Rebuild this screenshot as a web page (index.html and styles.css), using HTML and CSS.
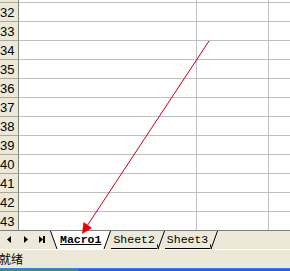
FILE: index.html
```html
<!DOCTYPE html>
<html>
<head>
<meta charset="utf-8">
<link rel="stylesheet" href="styles.css">
</head>
<body>
<div class="screen">
  <div class="sheet">
    <div class="row partial"><div class="hdr"></div><div class="cell a"></div><div class="cell b"></div><div class="cell c"></div></div>
    <div class="row"><div class="hdr">32</div><div class="cell a"></div><div class="cell b"></div><div class="cell c"></div></div>
    <div class="row"><div class="hdr">33</div><div class="cell a"></div><div class="cell b"></div><div class="cell c"></div></div>
    <div class="row"><div class="hdr">34</div><div class="cell a"></div><div class="cell b"></div><div class="cell c"></div></div>
    <div class="row"><div class="hdr">35</div><div class="cell a"></div><div class="cell b"></div><div class="cell c"></div></div>
    <div class="row"><div class="hdr">36</div><div class="cell a"></div><div class="cell b"></div><div class="cell c"></div></div>
    <div class="row"><div class="hdr">37</div><div class="cell a"></div><div class="cell b"></div><div class="cell c"></div></div>
    <div class="row"><div class="hdr">38</div><div class="cell a"></div><div class="cell b"></div><div class="cell c"></div></div>
    <div class="row"><div class="hdr">39</div><div class="cell a"></div><div class="cell b"></div><div class="cell c"></div></div>
    <div class="row"><div class="hdr">40</div><div class="cell a"></div><div class="cell b"></div><div class="cell c"></div></div>
    <div class="row"><div class="hdr">41</div><div class="cell a"></div><div class="cell b"></div><div class="cell c"></div></div>
    <div class="row"><div class="hdr">42</div><div class="cell a"></div><div class="cell b"></div><div class="cell c"></div></div>
    <div class="row"><div class="hdr">43</div><div class="cell a"></div><div class="cell b"></div><div class="cell c"></div></div>
  </div>
  <div class="tabbar">
    <div class="nav">
      <svg width="50" height="17" viewBox="0 0 50 17">
        <polygon points="11,5 7,8.5 11,12" fill="#000"/>
        <polygon points="24,5 28,8.5 24,12" fill="#000"/>
        <polygon points="39,5 43,8.5 39,12" fill="#000"/>
        <rect x="43" y="5" width="2" height="7" fill="#000"/>
      </svg>
    </div>
    <div class="tabs">
      <div class="tab active">
        <svg class="edge" width="8" height="18" viewBox="0 0 8 18"><polygon points="0,0 8,0 8,18 7,18" fill="#fff"/><line x1="0.5" y1="0" x2="7" y2="18" stroke="#000"/></svg>
        <span class="label">Macro1</span>
        <svg class="edge" width="8" height="18" viewBox="0 0 8 18"><polygon points="0,0 8,0 1,18 0,18" fill="#fff"/><line x1="1" y1="18" x2="7.5" y2="0" stroke="#000"/></svg>
      </div>
      <div class="tab">
        <span class="label">Sheet2</span>
        <svg class="edge" width="8" height="18" viewBox="0 0 8 18"><line x1="1" y1="18" x2="7.5" y2="0" stroke="#000"/><line x1="0" y1="13" x2="1.5" y2="18" stroke="#000"/></svg>
      </div>
      <div class="tab">
        <span class="label">Sheet3</span>
        <svg class="edge" width="8" height="18" viewBox="0 0 8 18"><line x1="1" y1="18" x2="7.5" y2="0" stroke="#000"/><line x1="0" y1="13" x2="1.5" y2="18" stroke="#000"/></svg>
      </div>
    </div>
  </div>
  <div class="status"><span class="ready">就绪</span></div>
  <div class="taskbar"><div class="start"></div></div>
  <svg class="arrow" width="290" height="271" viewBox="0 0 290 271">
    <line x1="209" y1="41" x2="87" y2="226" stroke="#c4001e" stroke-width="1"/>
    <polygon points="82,234 83.5,222 92,228" fill="#ee0000"/>
  </svg>
</div>
</body>
</html>
```
FILE: styles.css
```css
html, body {
  margin: 0;
  padding: 0;
  background: #fff;
}
.screen {
  position: relative;
  width: 290px;
  height: 271px;
  overflow: hidden;
  display: flex;
  flex-direction: column;
}
.sheet {
  display: flex;
  flex-direction: column;
  height: 230px;
  overflow: hidden;
}
.row {
  display: grid;
  grid-template-columns: 19px 178px 72px 1fr;
  height: 19px;
  flex: none;
}
.row.partial {
  height: 3px;
}
.hdr {
  box-sizing: border-box;
  background: #ece9d8;
  border-right: 1px solid #808080;
  border-bottom: 1px solid #aca899;
  font-family: "Liberation Sans", Arial, sans-serif;
  font-size: 13px;
  line-height: 19px;
  color: #000;
  text-align: right;
  padding-right: 6px;
  overflow: hidden;
  white-space: nowrap;
}
.cell {
  box-sizing: border-box;
  border-right: 1px solid #c0c0c0;
  border-bottom: 1px solid #c0c0c0;
}
.cell.c {
  border-right: none;
}
.tabbar {
  height: 18px;
  background: #ece9d8;
  border-top: 1px solid #808080;
  display: flex;
  flex: none;
}
.nav {
  width: 50px;
  flex: none;
}
.nav svg {
  display: block;
}
.tabs {
  display: flex;
  align-items: stretch;
}
.tab {
  display: flex;
  align-items: stretch;
  height: 18px;
}
.tab.active .label {
  background: #fff;
  font-weight: bold;
  text-decoration: underline;
}
.edge {
  display: block;
  flex: none;
}
.label {
  font-family: "Liberation Mono", "Courier New", monospace;
  font-size: 11.5px;
  line-height: 18px;
  color: #000;
  padding: 0 2px;
  border-bottom: 1px solid #000;
  box-sizing: border-box;
}
.tab.active .label {
  border-bottom-color: #fff;
}
.status {
  height: 18px;
  background: #ece9d8;
  border-top: 1px solid #fff;
  flex: none;
}
.ready {
  display: inline-block;
  margin-left: -1px;
  font-family: "Noto Sans CJK SC", sans-serif;
  font-size: 12px;
  line-height: 18px;
  color: #000;
}
.taskbar {
  flex: 1;
  background: #245edb;
  border-top: 1px solid #3d7bff;
  display: flex;
}
.start {
  width: 78px;
  background: #3a9a3a;
}
.arrow {
  position: absolute;
  left: 0;
  top: 0;
  pointer-events: none;
}
```
